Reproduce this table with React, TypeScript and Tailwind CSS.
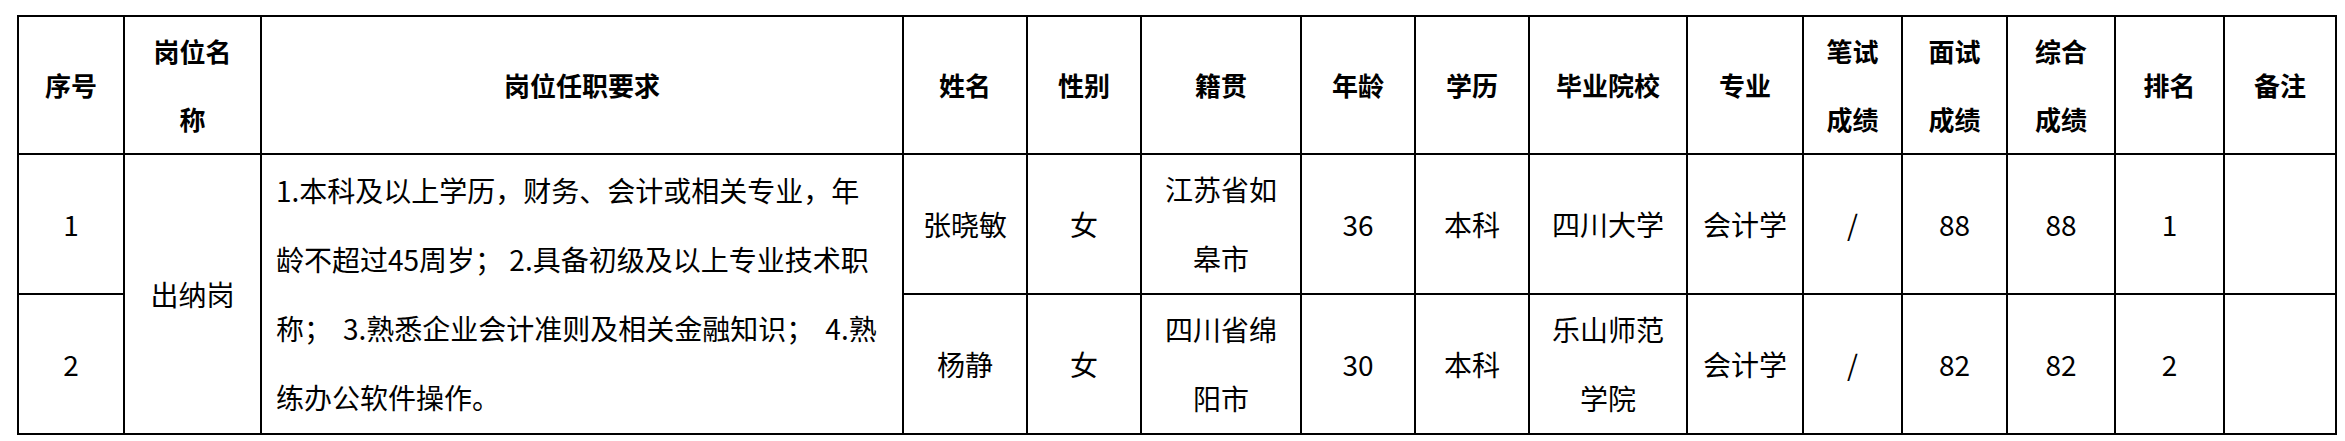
import React from "react";

const cell =
  "flex items-center justify-center text-center border-r-2 border-b-2 border-black";
const head = `${cell} font-bold text-[26px] leading-[68px]`;
const body = `${cell} text-[28px] leading-[69px]`;

function Lines({ lines }: { lines: React.ReactNode[] }) {
  return (
    <div>
      {lines.map((l, i) => (
        <div key={i} className="whitespace-pre">
          {l}
        </div>
      ))}
    </div>
  );
}

export default function App() {
  const rows = [
    {
      no: "1",
      name: "张晓敏",
      sex: "女",
      origin: ["江苏省如", "皋市"],
      age: "36",
      edu: "本科",
      school: ["四川大学"],
      major: "会计学",
      written: "/",
      interview: "88",
      total: "88",
      rank: "1",
    },
    {
      no: "2",
      name: "杨静",
      sex: "女",
      origin: ["四川省绵", "阳市"],
      age: "30",
      edu: "本科",
      school: ["乐山师范", "学院"],
      major: "会计学",
      written: "/",
      interview: "82",
      total: "82",
      rank: "2",
    },
  ];

  return (
    <div
      className="w-[2345px] h-[441px] bg-white text-black pt-[15px] pl-[17px]"
      style={{ fontFamily: '"Noto Sans CJK SC", "Noto Sans", sans-serif' }}
    >
      <div className="grid w-max grid-cols-[106px_137px_642px_124px_114px_160px_114px_114px_158px_116px_99px_105px_108px_109px_112px] grid-rows-[138px_140px_140px] border-l-2 border-t-2 border-black">
        {/* header */}
        <div className={head}>序号</div>
        <div className={head}>
          <Lines lines={["岗位名", "称"]} />
        </div>
        <div className={head}>岗位任职要求</div>
        <div className={head}>姓名</div>
        <div className={head}>性别</div>
        <div className={head}>籍贯</div>
        <div className={head}>年龄</div>
        <div className={head}>学历</div>
        <div className={head}>毕业院校</div>
        <div className={head}>专业</div>
        <div className={head}>
          <Lines lines={["笔试", "成绩"]} />
        </div>
        <div className={head}>
          <Lines lines={["面试", "成绩"]} />
        </div>
        <div className={head}>
          <Lines lines={["综合", "成绩"]} />
        </div>
        <div className={head}>排名</div>
        <div className={head}>备注</div>

        {/* row 1 with merged cells */}
        <div className={`${body} col-start-1 row-start-2`}>{rows[0].no}</div>
        <div className={`${body} col-start-2 row-start-2 row-span-2`}>出纳岗</div>
        <div
          className={`${body} col-start-3 row-start-2 row-span-2 !justify-start !text-left pl-[14px]`}
        >
          <Lines
            lines={[
              "1.本科及以上学历，财务、会计或相关专业，年",
              "龄不超过45周岁； 2.具备初级及以上专业技术职",
              <>
                称；<span className="inline-block w-[11px]"> </span>3.熟悉企业会计准则及相关金融知识；
                <span className="inline-block w-[11px]"> </span>4.熟
              </>,
              "练办公软件操作。",
            ]}
          />
        </div>
        <div className={`${body} col-start-4 row-start-2`}>{rows[0].name}</div>
        <div className={`${body} col-start-5 row-start-2`}>{rows[0].sex}</div>
        <div className={`${body} col-start-6 row-start-2`}>
          <Lines lines={rows[0].origin} />
        </div>
        <div className={`${body} col-start-7 row-start-2`}>{rows[0].age}</div>
        <div className={`${body} col-start-8 row-start-2`}>{rows[0].edu}</div>
        <div className={`${body} col-start-9 row-start-2`}>
          <Lines lines={rows[0].school} />
        </div>
        <div className={`${body} col-start-10 row-start-2`}>{rows[0].major}</div>
        <div className={`${body} col-start-11 row-start-2`}>{rows[0].written}</div>
        <div className={`${body} col-start-12 row-start-2`}>{rows[0].interview}</div>
        <div className={`${body} col-start-13 row-start-2`}>{rows[0].total}</div>
        <div className={`${body} col-start-14 row-start-2`}>{rows[0].rank}</div>
        <div className={`${body} col-start-15 row-start-2`}></div>

        {/* row 2 */}
        <div className={`${body} col-start-1 row-start-3`}>{rows[1].no}</div>
        <div className={`${body} col-start-4 row-start-3`}>{rows[1].name}</div>
        <div className={`${body} col-start-5 row-start-3`}>{rows[1].sex}</div>
        <div className={`${body} col-start-6 row-start-3`}>
          <Lines lines={rows[1].origin} />
        </div>
        <div className={`${body} col-start-7 row-start-3`}>{rows[1].age}</div>
        <div className={`${body} col-start-8 row-start-3`}>{rows[1].edu}</div>
        <div className={`${body} col-start-9 row-start-3`}>
          <Lines lines={rows[1].school} />
        </div>
        <div className={`${body} col-start-10 row-start-3`}>{rows[1].major}</div>
        <div className={`${body} col-start-11 row-start-3`}>{rows[1].written}</div>
        <div className={`${body} col-start-12 row-start-3`}>{rows[1].interview}</div>
        <div className={`${body} col-start-13 row-start-3`}>{rows[1].total}</div>
        <div className={`${body} col-start-14 row-start-3`}>{rows[1].rank}</div>
        <div className={`${body} col-start-15 row-start-3`}></div>
      </div>
    </div>
  );
}
